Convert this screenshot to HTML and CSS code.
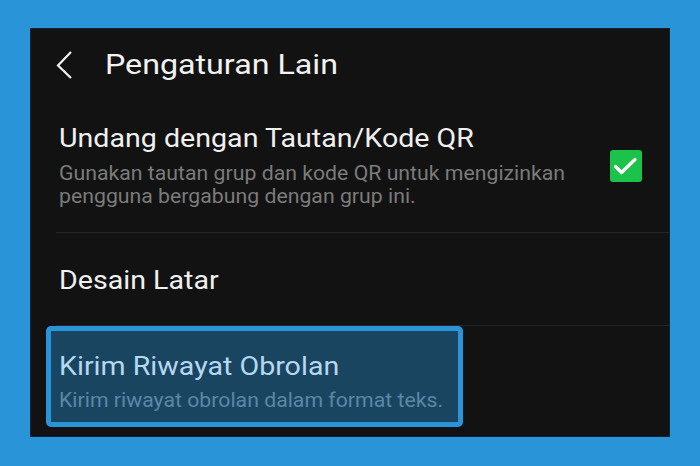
FILE: index.html
```html
<!DOCTYPE html>
<html lang="en">
<head>
    <meta charset="UTF-8">
    <meta name="viewport" content="width=device-width, initial-scale=1.0">
    <title>Pengaturan Lain</title>
    <link rel="stylesheet" href="styles.css">
</head>
<body>
    <div class="screen">
        <!-- Header -->
        <div class="header">
            <svg class="back" width="18" height="30" viewBox="0 0 18 30">
                <polyline points="15,2 2,15.5 15,28" fill="none" stroke="#f2f2f2" stroke-width="2.2"/>
            </svg>
            <h1>Pengaturan Lain</h1>
        </div>

        <div class="row row-invite">
            <div class="row-text">
                <div class="row-title">Undang dengan Tautan/Kode QR</div>
                <div class="row-sub">Gunakan tautan grup dan kode QR untuk mengizinkan<br>pengguna bergabung dengan grup ini.</div>
            </div>
            <div class="check">
                <svg width="32" height="32" viewBox="0 0 32 32">
                    <polyline points="5.5,16.5 11.5,22.5 25,9.5" fill="none" stroke="#ffffff" stroke-width="3.2" stroke-linecap="round" stroke-linejoin="round"/>
                </svg>
            </div>
        </div>

        <div class="row row-bg">
            <div class="row-title">Desain Latar</div>
        </div>

        <div class="highlight">
            <div class="row-title">Kirim Riwayat Obrolan</div>
            <div class="row-sub">Kirim riwayat obrolan dalam format teks.</div>
        </div>
    </div>
</body>
</html>
```

FILE: styles.css
```css
* {
    margin: 0;
    padding: 0;
    box-sizing: border-box;
    font-family: Roboto, "Noto Sans", sans-serif;
}

body {
    background: #2a94d8;
    width: 700px;
    height: 466px;
    padding: 28px 30px 0 30px;
    overflow: hidden;
}

.screen {
    width: 640px;
    height: 409px;
    background: #121212;
    border: 1px solid #0f2433;
    display: flex;
    flex-direction: column;
}

/* the capture is a little wider than the phone's own text */
.header h1, .row-title, .row-sub {
    transform-origin: left center;
    white-space: nowrap;
}

/* Header */
.header {
    height: 79px;
    display: flex;
    align-items: center;
    padding-left: 25px;
    padding-bottom: 8px;
}

.back {
    margin-right: 31px;
}

.header h1 {
    font-size: 28.5px;
    font-weight: 400;
    color: #f2f2f2;
    transform: scaleX(1.13);
}

/* Rows */
.row {
    margin-left: 25px;
    padding-left: 3px;
    border-bottom: 1px solid #262626;
}

.row-invite {
    height: 125px;
    display: flex;
    align-items: flex-start;
    padding-top: 15px;
    padding-right: 27px;
}

.row-text {
    flex: 1;
}

.row-title {
    font-size: 26px;
    line-height: 30px;
    color: #f0f0f0;
    transform: scaleX(1.1);
}

.row-sub {
    font-size: 19.5px;
    line-height: 23px;
    color: #7b7b7b;
    margin-top: 9px;
    transform: scaleX(1.09);
}

.check {
    width: 32px;
    height: 32px;
    margin-top: 27px;
    background: #1cc34b;
    border-radius: 3px;
}

.row-bg {
    height: 93px;
    display: flex;
    align-items: center;
    padding-top: 2px;
}

/* Selected item */
.highlight {
    margin-left: 15px;
    width: 417px;
    height: 101px;
    border: 5px solid #2a94d8;
    border-radius: 5px;
    background: #1a4561;
    padding: 20px 0 0 8px;
}

.highlight .row-title {
    color: #b4d8ef;
}

.highlight .row-sub {
    color: #5b87a6;
    margin-top: 8px;
}
```
